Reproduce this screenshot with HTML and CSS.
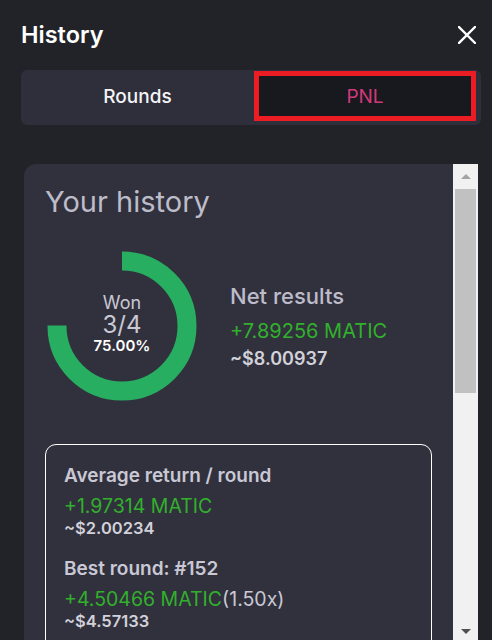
FILE: index.html
```html
<!DOCTYPE html>
<html lang="en">
<head>
<meta charset="utf-8">
<title>History</title>
<link rel="stylesheet" href="styles.css">
</head>
<body>
<div class="modal">
  <header class="modal-header">
    <h1 class="modal-title">History</h1>
    <button class="close-btn" aria-label="Close">
      <svg width="18" height="18" viewBox="0 0 18 18"><path d="M1 1 L17 17 M17 1 L1 17" stroke="#ffffff" stroke-width="2.4" stroke-linecap="square"/></svg>
    </button>
  </header>

  <nav class="tabs">
    <div class="tab">Rounds</div>
    <div class="tab tab-active">PNL</div>
  </nav>

  <div class="scroll-area">
    <section class="card">
      <h2 class="card-title">Your history</h2>

      <div class="summary">
        <div class="donut">
          <svg class="donut-svg" width="154" height="154" viewBox="0 0 154 154">
            <circle cx="77" cy="77" r="65" fill="none" stroke="#27ae60" stroke-width="19"
              stroke-dasharray="306.3 408.4" transform="rotate(-90 77 77)"/>
          </svg>
          <div class="donut-text">
            <div class="won-label">Won</div>
            <div class="won-count">3/4</div>
            <div class="won-pct">75.00%</div>
          </div>
        </div>
        <div class="net">
          <div class="net-label">Net results</div>
          <div class="amount-green big">+7.89256 MATIC</div>
          <div class="usd big-usd">~$8.00937</div>
        </div>
      </div>

      <div class="stats-box">
        <div class="stat">
          <div class="stat-label">Average return / round</div>
          <div class="amount-green">+1.97314 MATIC</div>
          <div class="usd">~$2.00234</div>
        </div>
        <div class="stat">
          <div class="stat-label">Best round: #152</div>
          <div class="amount-green">+4.50466 MATIC<span class="mult">(1.50x)</span></div>
          <div class="usd">~$4.57133</div>
        </div>
      </div>
    </section>

    <div class="scrollbar">
      <div class="sb-arrow sb-up"></div>
      <div class="sb-thumb"></div>
      <div class="sb-track"></div>
      <div class="sb-arrow sb-down"></div>
    </div>
  </div>
</div>
</body>
</html>
```

FILE: styles.css
```css
* { box-sizing: border-box; }

html, body {
  margin: 0;
  padding: 0;
  height: 100%;
  overflow: hidden;
}

body {
  background: #212328;
  font-family: Inter, "Noto Sans", sans-serif;
  color: #ffffff;
}

.modal {
  background: #212328;
  height: 640px;
  overflow: hidden;
}

.modal-header {
  display: flex;
  align-items: center;
  justify-content: space-between;
  padding: 21px 16px 0 21px;
}

.modal-title {
  margin: 0;
  font-size: 23.5px;
  line-height: 28px;
  font-weight: 600;
  color: #ffffff;
}

.close-btn {
  background: none;
  border: 0;
  padding: 0;
  margin: 0;
  width: 18px;
  height: 18px;
  display: flex;
}

.tabs {
  display: flex;
  margin: 21px 11px 0 21px;
  height: 55px;
  background: #2f2f3b;
  border-radius: 6px;
  padding: 1px 5px 4px 0;
}

.tab {
  flex: 1;
  display: flex;
  align-items: center;
  justify-content: center;
  font-size: 19px;
  font-weight: 500;
  color: #f4f4f6;
}

.tab-active {
  flex: 0 0 222px;
  background: #18181f;
  border: 5px solid #ec1c24;
  color: #d03a78;
  font-weight: 400;
}

.scroll-area {
  display: flex;
  margin: 39px 14px 0 24px;
  height: 476px;
}

.card {
  flex: 1;
  background: #31313d;
  border-top-left-radius: 12px;
  padding: 20px 21px 0 21px;
  min-height: 600px;
}

.card-title {
  margin: 0;
  font-size: 29px;
  line-height: 36px;
  font-weight: 400;
  color: #bdbcca;
}

.summary {
  display: flex;
  align-items: center;
  margin-top: 29px;
}

.donut {
  display: grid;
  width: 154px;
  height: 154px;
  place-items: center;
}

.donut-svg, .donut-text {
  grid-area: 1 / 1;
}

.donut-text {
  text-align: center;
  padding-bottom: 4px;
}

.won-label {
  font-size: 18px;
  line-height: 20px;
  color: #c9c8d4;
}

.won-count {
  font-size: 24px;
  line-height: 24px;
  color: #c9c8d4;
}

.won-pct {
  font-size: 15px;
  line-height: 18px;
  font-weight: 600;
  color: #ffffff;
}

.net {
  margin-left: 31px;
}

.net-label {
  font-size: 22px;
  line-height: 28px;
  font-weight: 500;
  color: #bdbcca;
  margin-bottom: 9px;
}

.amount-green {
  color: #31b02c;
  font-size: 19.5px;
  line-height: 23px;
}

.amount-green.big {
  font-size: 20px;
  line-height: 24px;
  margin-bottom: 5px;
}

.usd {
  font-size: 16.5px;
  line-height: 20px;
  font-weight: 600;
  color: #d2d1da;
}

.usd.big-usd {
  font-size: 18px;
  line-height: 22px;
}

.mult {
  color: #c9c8d4;
}

.stats-box {
  margin-top: 41px;
  border: 1px solid #ffffff;
  border-radius: 11px;
  padding: 20px 18px 20px 18px;
}

.stat + .stat {
  margin-top: 20px;
}

.stat-label {
  font-size: 19px;
  line-height: 22px;
  font-weight: 600;
  color: #c9c8d4;
  margin-bottom: 8px;
}

.scrollbar {
  flex: 0 0 25px;
  background: #f1f1f1;
  display: flex;
  flex-direction: column;
  align-items: center;
}

.sb-arrow {
  width: 0;
  height: 0;
  border-left: 5px solid transparent;
  border-right: 5px solid transparent;
}

.sb-up {
  margin-top: 10px;
  border-bottom: 5px solid #a3a3a3;
}

.sb-thumb {
  margin-top: 10px;
  width: 21px;
  height: 204px;
  background: #c1c1c1;
}

.sb-track {
  flex: 1;
}

.sb-down {
  margin-bottom: 6px;
  border-top: 5px solid #505050;
}
```
